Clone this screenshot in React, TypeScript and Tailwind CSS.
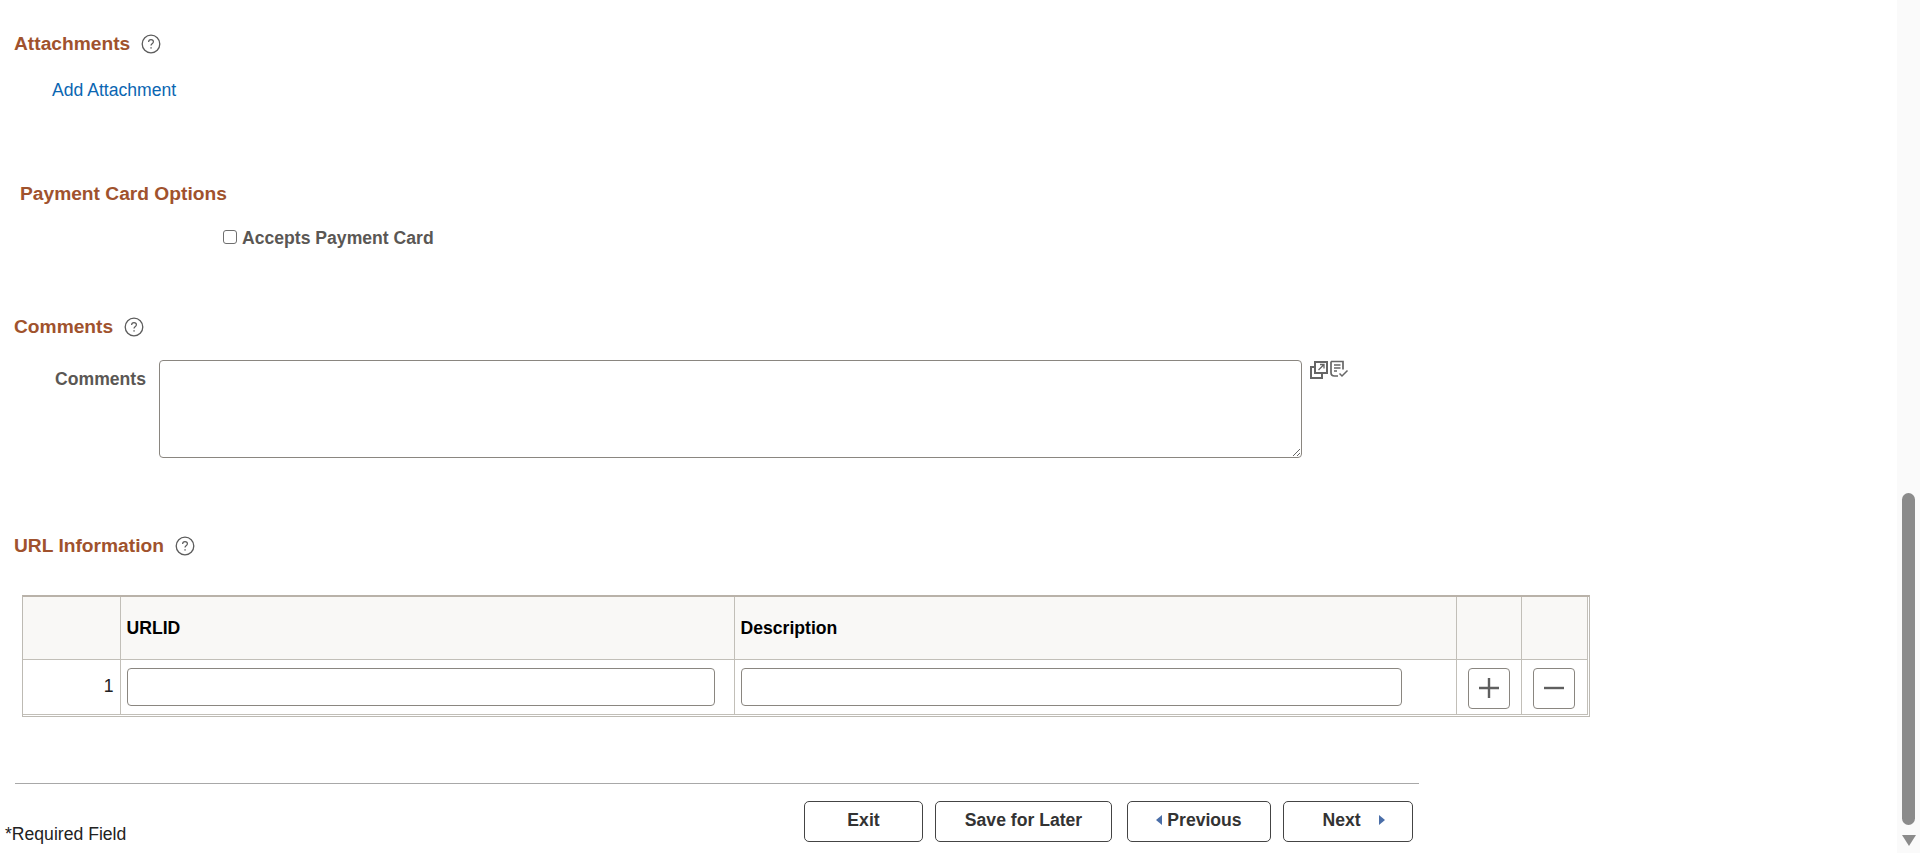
import { ReactNode } from "react";

function HelpIcon() {
    return (
        <svg width="20" height="20" viewBox="0 0 20 20" className="shrink-0">
            <circle cx="10" cy="10" r="8.8" fill="none" stroke="#5c5c5c" strokeWidth="1.3" />
            <path d="M7.6 8c0-1.5 1-2.4 2.4-2.4s2.4.9 2.4 2.2c0 1-.6 1.5-1.3 2-.7.5-1.1.9-1.1 1.8" fill="none" stroke="#5c5c5c" strokeWidth="1.2" />
            <rect x="9.4" y="13.2" width="1.3" height="1.4" fill="#5c5c5c" />
        </svg>
    );
}

function SectionTitle({ children, help, className }: { children: ReactNode; help?: string; className: string }) {
    return (
        <div className={"flex items-center h-5 " + className}>
            <h2 className={"text-[19.2px] leading-5 font-bold text-[#a0522d] " + (help || "")}>{children}</h2>
            {help && <HelpIcon />}
        </div>
    );
}

function ExpandIcons() {
    return (
        <svg width="40" height="20" viewBox="0 0 40 20" className="ml-2 shrink-0">
            <path d="M4 7H1v11h11v-4" fill="none" stroke="#666" strokeWidth="2" />
            <rect x="5" y="2" width="12" height="11" fill="none" stroke="#666" strokeWidth="2" />
            <path d="M8.5 10l5-5M10 4.5h4v4" fill="none" stroke="#666" strokeWidth="1.3" />
            <path d="M21 1.5h12v8M21 1.5v11c0 2.5 1 3.5 3.5 3.5H28" fill="none" stroke="#666" strokeWidth="1.7" />
            <path d="M24 5h6.5M24 8h6.5M24 11h3" fill="none" stroke="#666" strokeWidth="1.3" />
            <path d="M29.5 13.5l2.5 2.5 5.5-5.5" fill="none" stroke="#666" strokeWidth="1.5" />
        </svg>
    );
}

function FooterButton({ children, className }: { children: ReactNode; className: string }) {
    return (
        <button className={"h-[41px] pb-[2px] flex items-center justify-center border border-[#444] rounded-[5px] bg-white text-[17.6px] font-bold text-[#333] " + className}>
            {children}
        </button>
    );
}

export default function App() {
    return (
        <div className="flex h-[853px] overflow-hidden bg-white font-['Liberation_Sans',Arial,sans-serif]">
            <main className="flex-1 min-w-0">
                <SectionTitle help="mr-[11px]" className="mt-[34px] ml-[14px]">Attachments</SectionTitle>
                <a className="block mt-[26px] ml-[52px] text-[17.6px] leading-5 text-[#0a66b2]">Add Attachment</a>

                <SectionTitle className="mt-[84px] ml-[20px]">Payment Card Options</SectionTitle>
                <label className="flex items-center mt-[24px] ml-[223px] h-5">
                    <input type="checkbox" className="appearance-none w-[14px] h-[14px] border border-[#6f6f6f] rounded-[3px] bg-white mb-0.5" />
                    <span className="ml-[5px] text-[17.6px] leading-5 font-bold text-[#5a5754]">Accepts Payment Card</span>
                </label>

                <SectionTitle help="mr-[11px]" className="mt-[69px] ml-[14px]">Comments</SectionTitle>
                <div className="flex mt-[23px]">
                    <label className="w-[146px] pt-[9px] text-right text-[17.6px] leading-5 font-bold text-[#5a5754]">Comments</label>
                    <textarea className="ml-[13px] w-[1143px] h-[98px] border border-[#8a8680] rounded-[4px] outline-none" />
                    <ExpandIcons />
                </div>

                <SectionTitle help="mr-[11px]" className="mt-[78px] ml-[14px]">URL Information</SectionTitle>

                <div className="mt-[39px] ml-[22px] w-[1568px] pr-[1px] pb-[1px] border border-t-2 border-[#bdbab3] border-t-[#b9b2a9]">
                    <table className="w-full table-fixed border-collapse text-[17.6px]">
                        <colgroup>
                            <col className="w-[97px]" />
                            <col className="w-[614px]" />
                            <col className="w-[722px]" />
                            <col className="w-[65px]" />
                            <col />
                        </colgroup>
                        <thead>
                            <tr className="h-[62px] bg-[#f9f8f6] text-black">
                                <th className="border-r border-b border-[#c2bfb8]" />
                                <th className="border-r border-b border-[#c2bfb8] text-left font-bold pl-[6px]">URLID</th>
                                <th className="border-r border-b border-[#c2bfb8] text-left font-bold pl-[6px]">Description</th>
                                <th className="border-r border-b border-[#c2bfb8]" />
                                <th className="border-r border-b border-[#c2bfb8]" />
                            </tr>
                        </thead>
                        <tbody>
                            <tr className="h-[55px]">
                                <td className="border-r border-b border-[#c2bfb8] text-right pr-[6px] text-[#222]">1</td>
                                <td className="border-r border-b border-[#c2bfb8] pl-[6px]">
                                    <input className="block w-[588px] h-[38px] border border-[#8a8680] rounded-[4px] bg-white outline-none" />
                                </td>
                                <td className="border-r border-b border-[#c2bfb8] pl-[6px]">
                                    <input className="block w-[661px] h-[38px] border border-[#8a8680] rounded-[4px] bg-white outline-none" />
                                </td>
                                <td className="border-r border-b border-[#c2bfb8]">
                                    <button className="flex items-center justify-center mx-auto mt-[3px] w-[42px] h-[41px] border border-[#8a8680] rounded-[4px]">
                                        <svg width="20" height="20" viewBox="0 0 20 20">
                                            <path d="M0 10h20M10 0v20" stroke="#5f5f5f" strokeWidth="2.4" />
                                        </svg>
                                    </button>
                                </td>
                                <td className="border-r border-b border-[#c2bfb8]">
                                    <button className="flex items-center justify-center mx-auto mt-[3px] w-[42px] h-[41px] border border-[#8a8680] rounded-[4px]">
                                        <svg width="20" height="20" viewBox="0 0 20 20">
                                            <path d="M0 10h20" stroke="#5f5f5f" strokeWidth="2.4" />
                                        </svg>
                                    </button>
                                </td>
                            </tr>
                        </tbody>
                    </table>
                </div>

                <div className="mt-[66px] ml-[15px] w-[1404px] h-px bg-[#a8a8a8]" />

                <div className="flex mt-[17px]">
                    <div className="w-[804px] pl-[5px] pt-[23px] text-[17.6px] leading-5 text-[#222]">*Required Field</div>
                    <FooterButton className="w-[119px]">Exit</FooterButton>
                    <FooterButton className="ml-[12px] w-[177px]">Save for Later</FooterButton>
                    <FooterButton className="ml-[15px] w-[144px]">
                        <svg width="6" height="10" viewBox="0 0 6 10" className="mr-[5px]"><path d="M6 0v10L0 5z" fill="#4a6ea8" /></svg>
                        Previous
                    </FooterButton>
                    <FooterButton className="ml-[12px] w-[130px] pl-[11px]">
                        Next
                        <svg width="6" height="10" viewBox="0 0 6 10" className="ml-[18px]"><path d="M0 0v10l6-5z" fill="#4a6ea8" /></svg>
                    </FooterButton>
                </div>
            </main>

            <aside className="w-[23px] shrink-0 bg-[#fafafa] flex flex-col items-center pt-[493px]">
                <div className="w-[13px] h-[332px] rounded-[7px] bg-[#8b8b8b]" />
                <svg width="14" height="11" viewBox="0 0 14 11" className="mt-[10px]"><path d="M0 0h14L7 11z" fill="#8b8b8b" /></svg>
            </aside>
        </div>
    );
}
